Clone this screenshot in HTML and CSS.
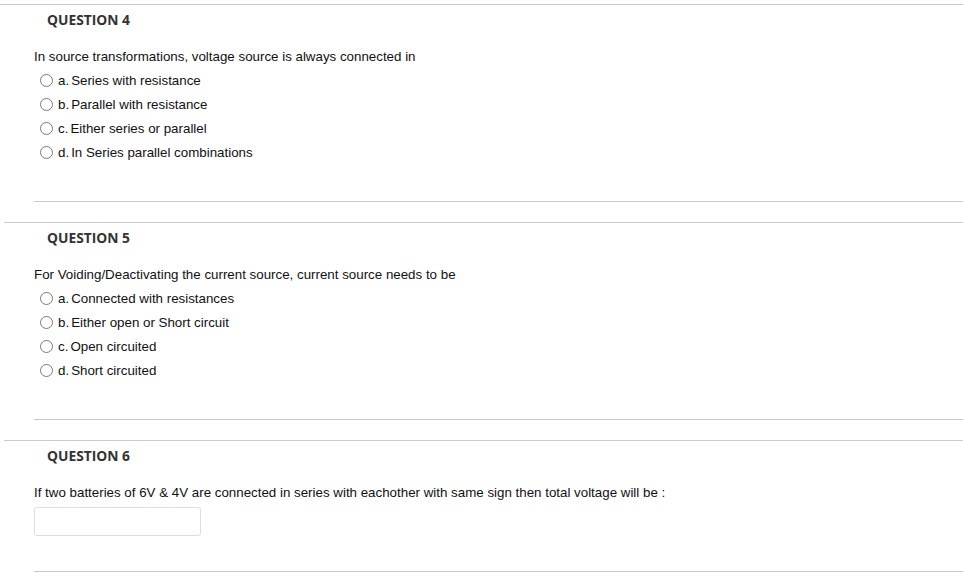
FILE: index.html
```html
<!DOCTYPE html>
<html>
<head>
<meta charset="utf-8">
<link rel="stylesheet" href="styles.css">
</head>
<body>
<div class="page">
  <section class="question first">
    <h2 class="qtitle">QUESTION 4</h2>
    <div class="qbody">
      <p class="qtext">In source transformations, voltage source is always connected in</p>
      <ul class="options">
        <li class="opt"><span class="radio"></span><span class="lbl">a.</span><span>Series with resistance</span></li>
        <li class="opt"><span class="radio"></span><span class="lbl">b.</span><span>Parallel with resistance</span></li>
        <li class="opt"><span class="radio"></span><span class="lbl">c.</span><span>Either series or parallel</span></li>
        <li class="opt"><span class="radio"></span><span class="lbl">d.</span><span>In Series parallel combinations</span></li>
      </ul>
      <div class="divider"></div>
    </div>
  </section>
  <section class="question">
    <h2 class="qtitle">QUESTION 5</h2>
    <div class="qbody">
      <p class="qtext">For Voiding/Deactivating the current source, current source needs to be</p>
      <ul class="options">
        <li class="opt"><span class="radio"></span><span class="lbl">a.</span><span>Connected with resistances</span></li>
        <li class="opt"><span class="radio"></span><span class="lbl">b.</span><span>Either open or Short circuit</span></li>
        <li class="opt"><span class="radio"></span><span class="lbl">c.</span><span>Open circuited</span></li>
        <li class="opt"><span class="radio"></span><span class="lbl">d.</span><span>Short circuited</span></li>
      </ul>
      <div class="divider"></div>
    </div>
  </section>
  <section class="question">
    <h2 class="qtitle">QUESTION 6</h2>
    <div class="qbody">
      <p class="qtext">If two batteries of 6V &amp; 4V are connected in series with eachother with same sign then total voltage will be :</p>
      <div class="answer"></div>
      <div class="divider short"></div>
    </div>
  </section>
</div>
</body>
</html>
```
FILE: styles.css
```css
html, body {
  margin: 0;
  padding: 0;
  background: #ffffff;
}
body {
  font-family: "Liberation Sans", Arial, sans-serif;
  font-size: 13.33px;
  color: #111111;
  overflow: hidden;
}
.page {
  padding-top: 4px;
}
.question {
  border-top: 1px solid #cccccc;
  margin-left: 4px;
  padding-top: 5px;
  margin-top: 20px;
}
.question.first {
  margin-left: 0;
  margin-top: 0;
}
.qtitle {
  margin: 0;
  padding-left: 43px;
  font-family: "Open Sans", sans-serif;
  font-weight: 700;
  font-size: 13.8px;
  line-height: 20px;
  color: #333333;
}
.question.first .qtitle {
  padding-left: 47px;
}
.qbody {
  padding-left: 30px;
}
.question.first .qbody {
  padding-left: 34px;
}
.qtext {
  margin: 18px 0 0 0;
  line-height: 18px;
}
.options {
  list-style: none;
  margin: 2px 0 0 0;
  padding: 0;
}
.opt {
  display: flex;
  align-items: center;
  height: 24px;
  padding-left: 6px;
}
.radio {
  width: 11px;
  height: 11px;
  border: 1px solid #7a7a7a;
  border-radius: 50%;
  background: #ffffff;
  margin-right: 5px;
  flex: none;
}
.lbl {
  margin-right: 2px;
}
.divider {
  border-top: 1px solid #cccccc;
  margin-top: 37px;
}
.answer {
  width: 165px;
  height: 27px;
  border: 1px solid #dddddd;
  border-radius: 3px;
  margin-top: 5px;
}
.divider.short {
  margin-top: 35px;
}
```
